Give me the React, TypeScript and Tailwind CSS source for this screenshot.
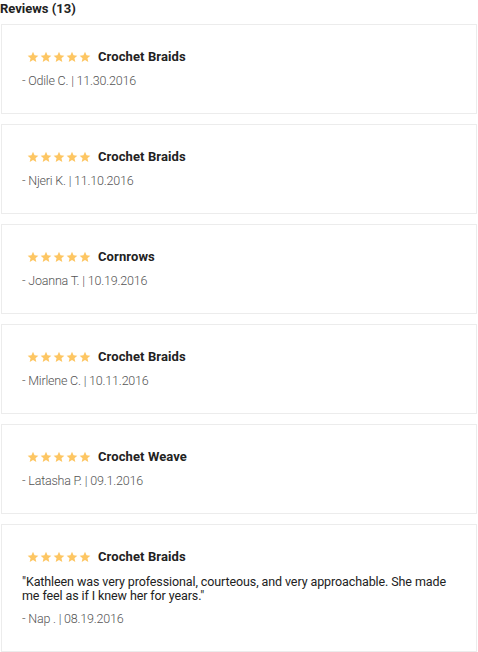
import React from "react";

type Review = { title: string; name: string; date: string; text?: string };

const reviews: Review[] = [
  { title: "Crochet Braids", name: "Odile C.", date: "11.30.2016" },
  { title: "Crochet Braids", name: "Njeri K.", date: "11.10.2016" },
  { title: "Cornrows", name: "Joanna T.", date: "10.19.2016" },
  { title: "Crochet Braids", name: "Mirlene C.", date: "10.11.2016" },
  { title: "Crochet Weave", name: "Latasha P.", date: "09.1.2016" },
  {
    title: "Crochet Braids",
    name: "Nap .",
    date: "08.19.2016",
    text: "\"Kathleen was very professional, courteous, and very approachable. She made me feel as if I knew her for years.\"",
  },
];

function Star() {
  return (
    <svg width="12" height="12" viewBox="0 0 24 24" className="shrink-0">
      <path
        fill="#fdc663"
        d="M12 1.5l3.1 7.1 7.6.7-5.8 5.1 1.7 7.6L12 18l-6.6 4 1.7-7.6-5.8-5.1 7.6-.7z"
      />
    </svg>
  );
}

export default function App() {
  return (
    <div className="w-[478px] bg-white font-['Roboto',sans-serif] text-[#222]">
      <div className="h-[24px] pt-[1px] text-[13px] font-bold leading-[16px] text-[#222]">Reviews (13)</div>
      <div className="flex flex-col gap-[10px]">
        {reviews.map((r, i) => (
          <div
            key={i}
            className="mx-[1px] border border-[#ececec] pb-[24px] pl-[20px] pr-[12px] pt-[24px]"
          >
            <div className="flex h-[16px] items-center">
              <div className="ml-[5px] flex gap-[1px]">
                <Star />
                <Star />
                <Star />
                <Star />
                <Star />
              </div>
              <span className="ml-[7px] text-[13px] font-bold leading-[16px] tracking-[0.1px] text-[#222]">{r.title}</span>
            </div>
            {r.text && (
              <p className="mt-[10px] text-[12.5px] leading-[14px] tracking-[-0.1px] text-[#222]">{r.text}</p>
            )}
            <div className="mt-[8px] text-[12.5px] font-light leading-[16px] tracking-[-0.2px] text-[#555]">
              - {r.name} | {r.date}
            </div>
          </div>
        ))}
      </div>
    </div>
  );
}
